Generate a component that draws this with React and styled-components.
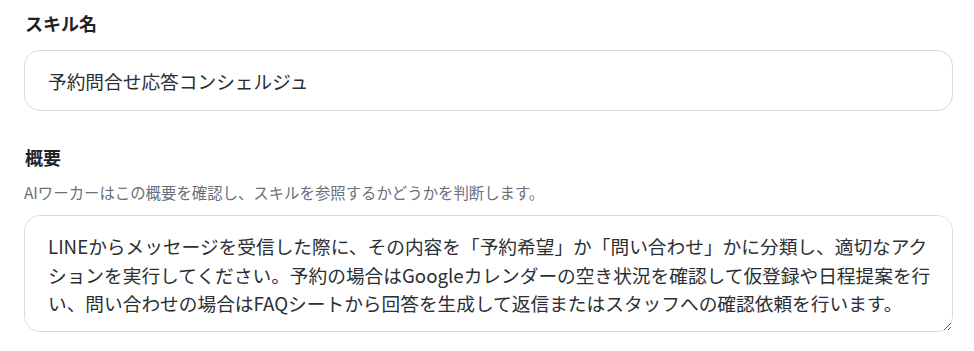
import * as React from "react";
import styled, { createGlobalStyle } from "styled-components";

const GlobalStyle = createGlobalStyle`
  body {
    margin: 0;
    background: #fff;
    font-family: "Noto Sans CJK JP", "Noto Sans", sans-serif;
  }
`;

const Form = styled.div`
  display: flex;
  flex-direction: column;
  padding: 10px 21px 0 24px;
`;

const Field = styled.div`
  display: flex;
  flex-direction: column;
  margin-bottom: ${(p) => p.$gap || 0}px;
`;

const Label = styled.label`
  font-family: "Noto Sans CJK JP", "Noto Sans", sans-serif;
  font-size: 18px;
  font-weight: 700;
  line-height: 27px;
  color: #1f2328;
  margin: 0 0 ${(p) => p.$mb}px 1px;
`;

const Help = styled.p`
  font-family: "Noto Sans CJK JP", "Noto Sans", sans-serif;
  font-size: 15.4px;
  line-height: 23px;
  color: #6b7078;
  margin: 0 0 11px;
`;

const TextInput = styled.input`
  box-sizing: border-box;
  width: 100%;
  height: 61px;
  padding: 0 23px;
  border: 1px solid #d5dae1;
  border-radius: 16px;
  background: #fff;
  font-family: "Noto Sans CJK JP", "Noto Sans", sans-serif;
  font-size: 18.7px;
  color: #2b2f33;
  outline: none;
`;

// resizable text box; a div so that Japanese line breaking can be controlled
const TextBox = styled.div`
  box-sizing: border-box;
  width: 100%;
  height: 117px;
  padding: 16px 12px 14px 23px;
  border: 1px solid #d5dae1;
  border-radius: 16px;
  background: #fff;
  font-family: "Noto Sans CJK JP", "Noto Sans", sans-serif;
  font-size: 18.7px;
  line-height: 28.5px;
  line-break: strict;
  color: #2b2f33;
  overflow: auto;
  resize: both;
`;

// keeps small kana with the character before it
const NoBreak = styled.span`
  white-space: nowrap;
`;

export default function App() {
  return (
    <>
      <GlobalStyle />
      <Form lang="ja">
        <Field $gap={33}>
          <Label $mb={13}>スキル名</Label>
          <TextInput defaultValue="予約問合せ応答コンシェルジュ" />
        </Field>
        <Field>
          <Label $mb={10}>概要</Label>
          <Help>AIワーカーはこの概要を確認し、スキルを参照するかどうかを判断します。</Help>
          <TextBox role="textbox" aria-multiline="true">
            LINEからメッセージを受信した際に、その内容を「予約希望」か「問い合わせ」かに分類し、適切なアク
            <NoBreak>ション</NoBreak>
            を実行してください。予約の場合はGoogleカレンダーの空き状況を確認して仮登録や日程提案を行い、問い合わせの場合はFAQシートから回答を生成して返信またはスタッフへの確認依頼を行います。
          </TextBox>
        </Field>
      </Form>
    </>
  );
}
